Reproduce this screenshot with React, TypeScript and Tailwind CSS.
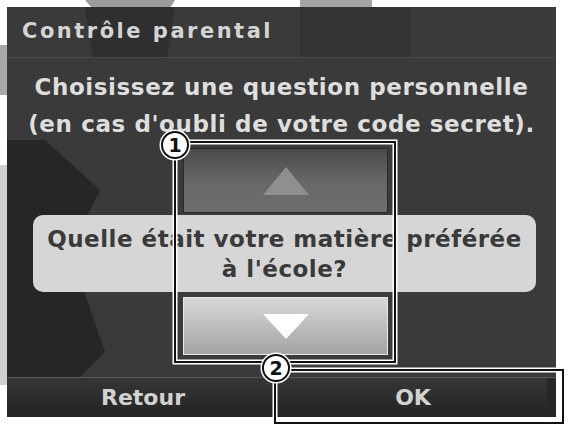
import React from "react";

const font = { fontFamily: '"DejaVu Sans", "Liberation Sans", sans-serif' };

function Callout({ n, x, y }: { n: string; x: number; y: number }) {
  return (
    <div
      className="absolute w-[28px] h-[28px] rounded-full bg-white border-2 border-[#111] shadow-[0_0_0_1.5px_#fff] flex items-center justify-center text-[19px] font-bold text-[#111] leading-none"
      style={{ left: x - 14, top: y - 14, ...font }}
    >
      {n}
    </div>
  );
}

export default function App() {
  return (
    <div className="relative w-[568px] h-[428px] bg-white overflow-hidden pt-[7px] pl-[7px]" style={font}>
      <svg className="absolute left-0 top-0" width="568" height="428">
        <polygon points="85,0 175,0 170,8 92,8" fill="#9c9c9c" />
        <polygon points="300,0 372,0 372,8 300,8" fill="#a4a4a4" />
        <polygon points="0,45 7,45 7,95 0,95" fill="#a8a8a8" />
        <polygon points="0,165 7,165 7,385 0,385" fill="#cfcfcf" />
      </svg>

      <div className="relative w-[549px] h-[410px] bg-[#3a3a3a] flex flex-col overflow-hidden">
        <svg className="absolute left-0 top-0" width="549" height="410">
          <polygon points="78,0 168,0 160,51 86,51" fill="#2f2f2f" />
          <polygon points="293,0 403,0 403,51 293,51" fill="#333333" />
          <polygon points="0,133 38,133 93,183 63,243 98,345 38,405 0,405" fill="#262626" />
        </svg>

        <div className="relative h-[51px] pl-[15px] flex items-center border-b border-[#4a4a4a] text-[21px] font-bold tracking-[2.5px] text-[#d4d4d4]">
          Contrôle parental
        </div>

        <div className="relative pt-[11px] text-center text-[23px] leading-[37px] font-bold tracking-[0.6px] text-[#dedede]">
          <div>Choisissez une question personnelle</div>
          <div>(en cas d'oubli de votre code secret).</div>
        </div>

        <div className="relative mt-[5px] ml-[176px] w-[205px] h-[65px] border border-[#2a2a2a] bg-gradient-to-b from-[#4a4a4a] via-[#676767] to-[#6e6e6e] flex items-center justify-center">
          <svg width="46" height="28" viewBox="0 0 46 28">
            <polygon points="23,0 46,28 0,28" fill="#8f8f8f" />
          </svg>
        </div>

        <div className="relative mt-[2px] ml-[26px] w-[503px] h-[77px] rounded-[10px] bg-[#d6d6d6] flex flex-col items-center justify-center text-[23px] leading-[30px] font-bold tracking-[0.5px] text-[#3a3a3a]">
          <div>Quelle était votre matière préférée</div>
          <div>à l'école?</div>
        </div>

        <div className="relative mt-[5px] ml-[176px] w-[205px] h-[58px] border border-[#e8e8e8] bg-gradient-to-b from-[#d8d8d8] to-[#a4a4a4] flex items-center justify-center">
          <svg width="46" height="25" viewBox="0 0 46 25">
            <polygon points="0,0 46,0 23,25" fill="#ffffff" />
          </svg>
        </div>

        <div className="relative mt-auto h-[40px] border-t border-[#5a5a5a] bg-[#262626] flex">
          <div className="w-[272px] h-full bg-gradient-to-b from-[#363636] to-[#242424] flex items-center justify-center text-[22px] font-bold text-[#d2d2d2]">
            Retour
          </div>
          <div className="w-[268px] h-full bg-gradient-to-b from-[#363636] to-[#242424] flex items-center justify-center text-[22px] font-bold text-[#d2d2d2]">
            OK
          </div>
        </div>
      </div>

      <div className="absolute left-[174px] top-[141px] w-[222px] h-[222px] border-2 border-[#111] shadow-[0_0_0_1.5px_#fff,inset_0_0_0_1.5px_#fff]" />
      <div className="absolute left-[274px] top-[369px] w-[290px] h-[55px] border-2 border-[#111] shadow-[0_0_0_1.5px_#fff,inset_0_0_0_1.5px_#fff]" />
      <Callout n="1" x={175} y={145} />
      <Callout n="2" x={276} y={368} />
    </div>
  );
}
